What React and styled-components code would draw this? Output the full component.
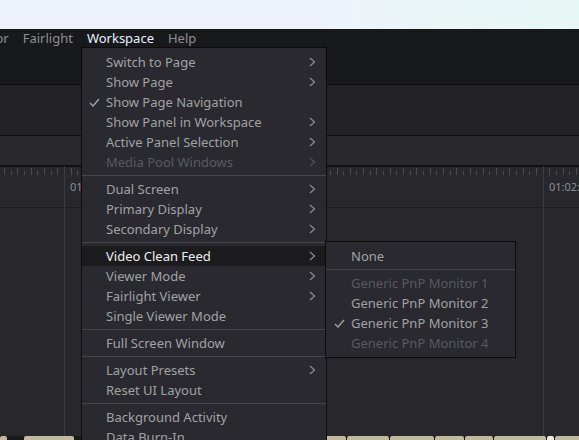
import React from 'react'
import styled, { createGlobalStyle } from 'styled-components';

const GlobalStyle = createGlobalStyle`
  html, body {
    margin: 0;
    overflow: hidden;
    background: #18191b;
  }
  body {
    font-family: "Noto Sans", "Open Sans", sans-serif;
  }
`;

const Page = styled.div`
  position: relative;
  display: flex;
  flex-direction: column;
  width: 579px;
  height: 440px;
  overflow: hidden;
  background: #18191b;
`;

const TitleBand = styled.div`
  height: 29px;
  flex: none;
  background: linear-gradient(90deg, #eef2fb 0%, #eef3fb 55%, #e6f8f5 100%);
`;

const MenuBar = styled.div`
  height: 18px;
  flex: none;
  display: flex;
  align-items: center;
  gap: 14px;
  background: #18191b;
  font-size: 13px;
  overflow: hidden;
`;

const MenuTitle = styled.span`
  color: ${props => props.active ? '#e9f1ff' : '#8f8f92'};
  margin-left: ${props => props.shift || 0}px;
  white-space: nowrap;
  line-height: 18px;
`;

const Toolbar = styled.div`
  height: 37px;
  flex: none;
  background: #18191b;
  border-bottom: 1px solid #0b0b0c;
`;

const Panel = styled.div`
  height: 50px;
  flex: none;
  background: #222227;
  border-bottom: 1px solid #0e0e10;
`;

const Strip = styled.div`
  height: 29px;
  flex: none;
  background: #28282d;
  border-bottom: 1px solid #101012;
`;

const Timeline = styled.div`
  position: relative;
  flex: 1;
  display: flex;
  flex-direction: column;
  background: #27272c;
`;

const Ruler = styled.svg`
  display: block;
  flex: none;
`;

const TimecodeRow = styled.div`
  height: 30px;
  flex: none;
  border-bottom: 1px solid #1e1e22;
`;

const Tracks = styled.div`
  flex: 1;
`;

const ClipRow = styled.div`
  height: 4px;
  flex: none;
  display: flex;
  background: #1a1a1c;
`;

const Clip = styled.div`
  width: ${props => props.w}px;
  margin-left: ${props => props.gap}px;
  flex: none;
  background: ${props => props.light ? '#eceae4' : '#c2b9a0'};
  border-radius: 2px 2px 0 0;
`;

const Marker = styled.div`
  position: absolute;
  top: 0;
  bottom: 4px;
  left: ${props => props.x}px;
  width: 1px;
  background: #3b3b41;
`;

const Timecode = styled.span`
  position: absolute;
  top: 13px;
  left: ${props => props.x}px;
  font-family: "Noto Sans", sans-serif;
  font-size: 11px;
  color: #8d8d92;
`;

const Menu = styled.div`
  position: absolute;
  top: ${props => props.top}px;
  left: ${props => props.left}px;
  width: ${props => props.width}px;
  box-sizing: border-box;
  padding: 4px 0 4px;
  background: #29292f;
  border: 1px solid #0c0c0e;
  font-size: 13px;
`;

const Item = styled.div`
  position: relative;
  display: flex;
  align-items: center;
  height: 20px;
  padding-left: ${props => props.indent}px;
  color: ${props => props.disabled ? '#59595e' : props.hot ? '#eeeeee' : '#a2a2a5'};
  background: ${props => props.hot ? '#1c1c1f' : 'transparent'};
  white-space: nowrap;
`;

const Check = styled.svg`
  position: absolute;
  left: ${props => props.x}px;
  top: 6px;
`;

const Chevron = styled.svg`
  position: absolute;
  right: 10px;
  top: 5px;
`;

const Separator = styled.div`
  height: 1px;
  margin: 3px 0;
  background: #45454b;
`;

const CheckMark = ({ x }) => (
  <Check x={x} width="11" height="9" viewBox="0 0 11 9">
    <path d="M1 5 L4 8 L10 1" fill="none" stroke="#a2a2a5" strokeWidth="1.4" />
  </Check>
);

const Arrow = ({ dim }) => (
  <Chevron width="7" height="10" viewBox="0 0 7 10">
    <path d="M1 1 L5.5 5 L1 9" fill="none" stroke={dim ? '#505055' : '#8a8a8e'} strokeWidth="1.3" />
  </Chevron>
);

const mainMenu = [
  [
    { label: 'Switch to Page', sub: true },
    { label: 'Show Page', sub: true },
    { label: 'Show Page Navigation', checked: true },
    { label: 'Show Panel in Workspace', sub: true },
    { label: 'Active Panel Selection', sub: true },
    { label: 'Media Pool Windows', sub: true, disabled: true },
  ],
  [
    { label: 'Dual Screen', sub: true },
    { label: 'Primary Display', sub: true },
    { label: 'Secondary Display', sub: true },
  ],
  [
    { label: 'Video Clean Feed', sub: true, hot: true },
    { label: 'Viewer Mode', sub: true },
    { label: 'Fairlight Viewer', sub: true },
    { label: 'Single Viewer Mode' },
  ],
  [
    { label: 'Full Screen Window' },
  ],
  [
    { label: 'Layout Presets', sub: true },
    { label: 'Reset UI Layout' },
  ],
  [
    { label: 'Background Activity' },
    { label: 'Data Burn-In' },
  ],
];

const feedMenu = [
  [{ label: 'None' }],
  [
    { label: 'Generic PnP Monitor 1', disabled: true },
    { label: 'Generic PnP Monitor 2' },
    { label: 'Generic PnP Monitor 3', checked: true },
    { label: 'Generic PnP Monitor 4', disabled: true },
  ],
];

const clips = [
  { gap: 0, w: 7 }, { gap: 17, w: 50 }, { gap: 8, w: 240 },
  { gap: 1, w: 23 }, { gap: 1, w: 42 }, { gap: 1, w: 44 },
  { gap: 1, w: 29 }, { gap: 1, w: 28 }, { gap: 1, w: 52 },
  { gap: 1, w: 7, light: true }, { gap: 1, w: 30 },
];

function MenuGroups({ groups, indent, checkX }) {
  return groups.map((group, g) => (
    <React.Fragment key={g}>
      {g > 0 && <Separator />}
      {group.map(item => (
        <Item key={item.label} indent={indent} hot={item.hot} disabled={item.disabled}>
          {item.checked && <CheckMark x={checkX} />}
          {item.label}
          {item.sub && <Arrow dim={item.disabled} />}
        </Item>
      ))}
    </React.Fragment>
  ));
}

function RulerTicks() {
  const ticks = [];
  for (let i = 0; i < 88; i++) {
    const x = 4 + i * 6.65;
    const tall = i % 2 === 0;
    ticks.push(
      <rect key={i} x={Math.round(x)} y={tall ? 2 : 5} width="1" height={tall ? 7 : 4} fill="#4b4b51" />
    );
  }
  return (
    <Ruler width="579" height="11">
      <rect width="579" height="11" fill="#28282d" />
      <rect width="579" height="1" fill="#0f0f11" />
      {ticks}
      <rect x="64" y="1" width="1" height="10" fill="#8a8a90" />
      <rect x="543" y="1" width="1" height="10" fill="#8a8a90" />
    </Ruler>
  );
}

export default function App() {
  return (
    <>
      <GlobalStyle />
      <Page>
        <TitleBand />
        <MenuBar>
          <MenuTitle shift={-24}>Color</MenuTitle>
          <MenuTitle>Fairlight</MenuTitle>
          <MenuTitle active>Workspace</MenuTitle>
          <MenuTitle>Help</MenuTitle>
        </MenuBar>
        <Toolbar />
        <Panel />
        <Strip />
        <Timeline>
          <RulerTicks />
          <TimecodeRow />
          <Tracks />
          <ClipRow>
            {clips.map((c, i) => <Clip key={i} {...c} />)}
          </ClipRow>
          <Marker x={64} />
          <Marker x={543} />
          <Timecode x={70}>01</Timecode>
          <Timecode x={549}>01:02:</Timecode>
        </Timeline>

        <Menu top={47} left={81} width={246}>
          <MenuGroups groups={mainMenu} indent={24} checkX={7} />
        </Menu>
        <Menu top={241} left={325} width={191}>
          <MenuGroups groups={feedMenu} indent={25} checkX={8} />
        </Menu>
      </Page>
    </>
  );
}
